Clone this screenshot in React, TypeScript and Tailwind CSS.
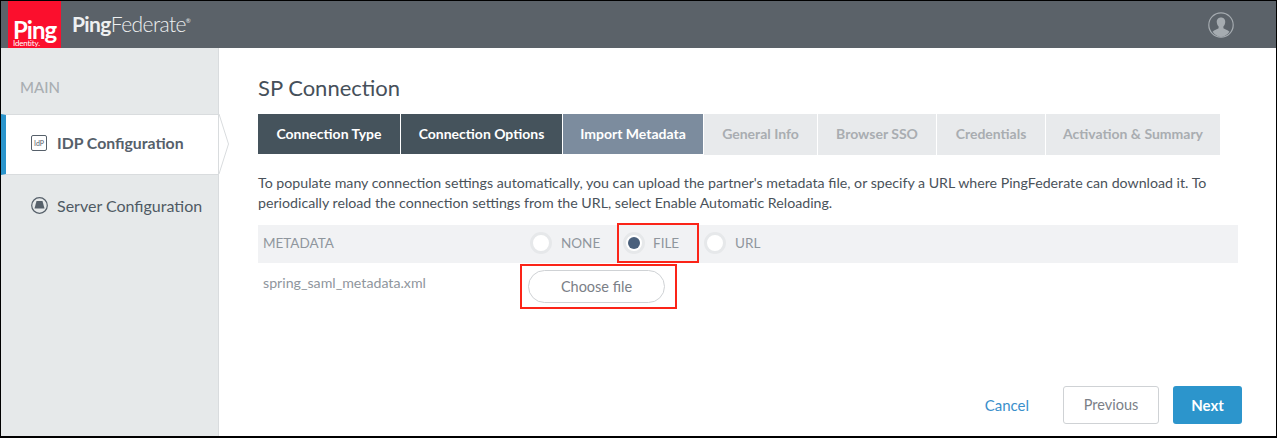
const font = { fontFamily: '"Lato", "Liberation Sans", sans-serif' };

const tabs = [
  { label: "Connection Type", w: "w-[142px]", cls: "bg-[#45535c] text-white h-[40px]" },
  { label: "Connection Options", w: "w-[161px]", cls: "bg-[#45535c] text-white h-[40px]" },
  { label: "Import Metadata", w: "w-[140px]", cls: "bg-[#7c8c9e] text-white h-[40px]" },
  { label: "General Info", w: "w-[113px]", cls: "bg-[#e8eaec] text-[#a9adb1] h-[41px]" },
  { label: "Browser SSO", w: "w-[118px]", cls: "bg-[#e8eaec] text-[#a9adb1] h-[41px]" },
  { label: "Credentials", w: "w-[108px]", cls: "bg-[#e8eaec] text-[#a9adb1] h-[41px]" },
  { label: "Activation & Summary", w: "w-[174px]", cls: "bg-[#e8eaec] text-[#a9adb1] h-[41px]" },
];

function Radio({ checked }: { checked?: boolean }) {
  return (
    <span className="flex h-[22px] w-[22px] items-center justify-center rounded-full border-[3px] border-[#e6e8ea] bg-white">
      {checked && <span className="h-[12px] w-[12px] rounded-full bg-[#4a607c]" />}
    </span>
  );
}

export default function App() {
  return (
    <div className="flex h-[438px] w-[1277px] flex-col overflow-hidden border border-b-2 border-black bg-white" style={font}>
      <header className="flex h-[47px] shrink-0 items-stretch bg-[#5b6269]">
        <div className="ml-[7px] flex h-[47px] w-[53px] flex-col items-start justify-end bg-[#fb0f2d] pb-[1px] pl-[5px] text-white">
          <span className="text-[24px] font-bold leading-[21px] tracking-[-1px]">Ping</span>
          <span className="text-[8px] leading-[7px] tracking-[-0.2px]">Identity.</span>
        </div>
        <div className="ml-[11px] flex items-center pb-[1px] text-[21px] tracking-[-0.6px] text-[#eef0f1]">
          <span className="font-bold">Ping</span>
          <span className="font-light">Federate</span>
          <span className="mb-[8px] text-[6px]">®</span>
        </div>
        <div className="ml-auto mr-[42px] flex items-center">
          <svg width="26" height="26" viewBox="0 0 26 26" fill="none">
            <circle cx="13" cy="13" r="12.2" stroke="#a5abb0" strokeWidth="1.2" />
            <path d="M13 5.5c-3 0-4.5 2.2-4.2 5 .2 1.8 1 3.2 1.8 4.1v1.7c-1.5 1-4.3 1.7-6 3.4A12 12 0 0 0 13 25a12 12 0 0 0 8.4-5.3c-1.7-1.7-4.500-2.400-6-3.400v-1.700c.8-.9 1.600-2.300 1.800-4.100.3-2.800-1.200-5-4.200-5z" fill="#a5abb0" />
          </svg>
        </div>
      </header>
      <div className="flex min-h-0 flex-1">
        <aside className="w-[218px] shrink-0 border-r border-[#d9dcde] bg-[#e6e9ea]">
          <div className="pl-[19px] pt-[29px] text-[15px] font-medium leading-[20px] text-[#a9aeb2]">MAIN</div>
          <div className="relative mt-[17px] flex h-[61px] items-center border-y border-[#d9dcde] border-l-[5px] border-l-[#2a94cb] bg-white pb-[3px] pl-[25px] text-[15.800px] font-bold text-[#56606a]">
            <span className="flex h-[16px] w-[16px] items-center justify-center rounded-[2px] border border-[#56606a] text-[7px] font-normal leading-none">IdP</span>
            <span className="ml-[10px] whitespace-nowrap">IDP Configuration</span>
            <svg className="absolute left-[213px] top-[-1px]" width="11" height="61" viewBox="0 0 11 61" fill="white">
              <path d="M0 0 L9.500 30 L0 60" stroke="#d9dcde" strokeWidth="1" />
            </svg>
          </div>
          <div className="mt-[19px] flex items-center pl-[30px] text-[16px] text-[#4f5a64]">
            <svg className="mb-[2px]" width="17" height="17" viewBox="0 0 17 17" fill="none">
              <circle cx="8.500" cy="8.500" r="7.800" stroke="#56606a" strokeWidth="1.200" />
              <path d="M5.500 4h6l2 7.500H3.500z" fill="#56606a" />
            </svg>
            <span className="ml-[9px] whitespace-nowrap">Server Configuration</span>
          </div>
        </aside>
        <main className="relative min-w-0 flex-1 pl-[39px]">
          <h1 className="pt-[26px] text-[22px] leading-[28px] text-[#46505a]">SP Connection</h1>
          <div className="mt-[12px] flex items-start gap-[1px]">
            {tabs.map((t) => (
              <div key={t.label} className={`flex shrink-0 items-center justify-center whitespace-nowrap pb-[2px] text-[14px] font-bold ${t.w} ${t.cls}`}>{t.label}</div>
            ))}
          </div>
          <p className="mt-[18px] w-[990px] text-[14.200px] leading-[20px] text-[#4a525a]">
            To populate many connection settings automatically, you can upload the partner's metadata file, or specify a URL where PingFederate can download it. To periodically reload the connection settings from the URL, select Enable Automatic Reloading.
          </p>
          <div className="mt-[12px] flex h-[38px] w-[980px] items-center bg-[#f1f2f4] pb-[2px] pl-[5px] text-[13.500px] text-[#8f969d]">
            <span className="w-[267px]">METADATA</span>
            <Radio />
            <span className="ml-[9px] w-[38px]">NONE</span>
            <span className="ml-[24px]"><Radio checked /></span>
            <span className="ml-[8px] w-[27px]">FILE</span>
            <span className="ml-[24px]"><Radio /></span>
            <span className="ml-[9px]">URL</span>
          </div>
          <div className="flex items-start pl-[5px] pt-[7px]">
            <span className="mt-[3px] w-[265px] text-[14.200px] leading-[20px] text-[#8f969d]">spring_saml_metadata.xml</span>
            <button className="h-[33px] w-[137px] rounded-full border border-[#cfd2d5] bg-white text-[14.500px] text-[#7b8087]">Choose file</button>
          </div>
          <div className="absolute bottom-[12px] right-[34px] flex items-center">
            <span className="mr-[34px] text-[15px] text-[#3a8fcb]">Cancel</span>
            <button className="h-[38px] w-[96px] rounded-[3px] border border-[#cfd2d5] bg-white text-[14.500px] text-[#7b8087]">Previous</button>
            <button className="ml-[14px] h-[38px] w-[69px] rounded-[3px] bg-[#2c95cc] text-[15px] font-bold text-white">Next</button>
          </div>
          <div className="absolute left-[398px] top-[175px] h-[40px] w-[82px] border-2 border-[#fb2418]" />
          <div className="absolute left-[301px] top-[216px] h-[45px] w-[157px] border-2 border-[#fb2418]" />
        </main>
      </div>
    </div>
  );
}
